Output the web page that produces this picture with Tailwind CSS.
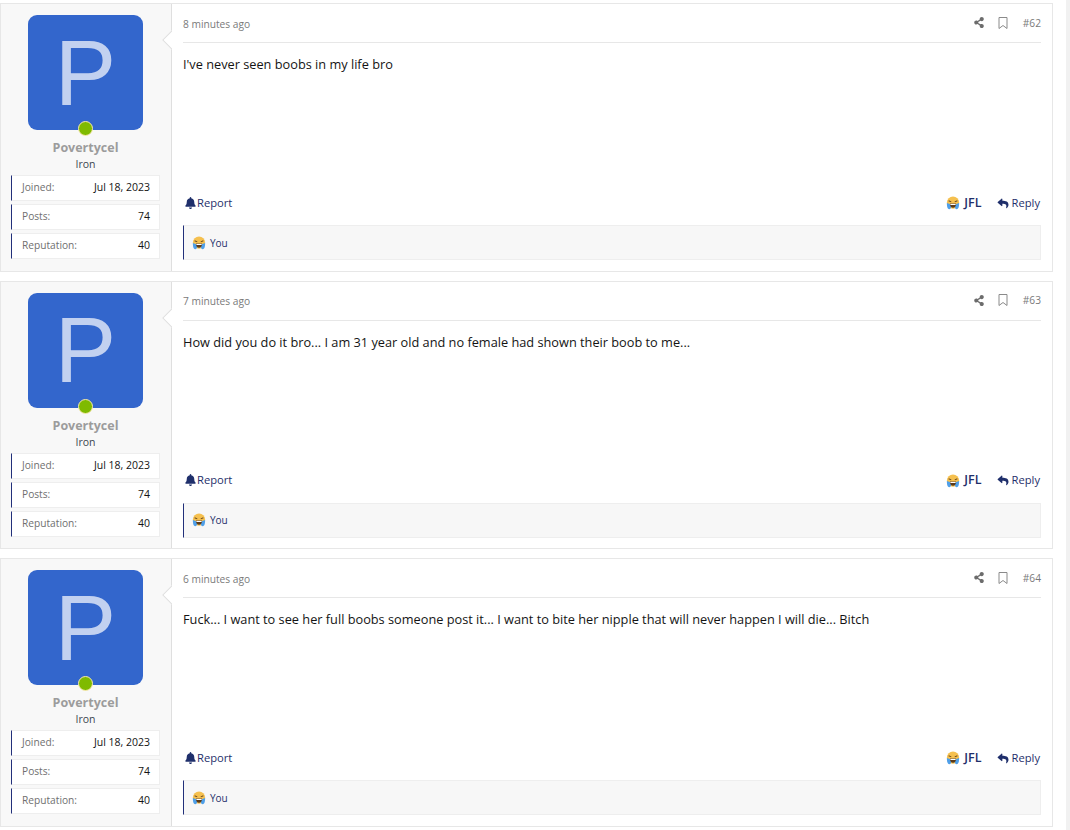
<!DOCTYPE html>
<html lang="en">
<head>
<meta charset="UTF-8">
<title>Thread</title>
<script src="https://cdn.jsdelivr.net/npm/@tailwindcss/browser@4"></script>
</head>
<body class="bg-white font-['Open_Sans',sans-serif] text-[#141414] overflow-hidden">
<svg class="hidden">
  <symbol id="cry" viewBox="0 0 16 16">
    <circle cx="8" cy="7.5" r="7" fill="#f5c04f"/>
    <path d="M1 8c0 3 .3 7 2.800 7S6.500 11.500 5 9.500zM15 8c0 3-.3 7-2.800 7S9.500 11.500 11 9.500z" fill="#4f9fe8"/>
    <path d="M3 5.500l3 1.200M13 5.500l-3 1.200" stroke="#6b4a1f" stroke-width="1.200" fill="none"/>
    <path d="M4.500 8.500h7c0 3.500-1.500 4.800-3.500 4.800s-3.500-1.300-3.500-4.800z" fill="#5a3a1a"/>
    <path d="M5 9h6v1.300H5z" fill="#fff"/>
  </symbol>
  <symbol id="bell" viewBox="0 0 448 512">
    <path fill="currentColor" d="M224 512c35 0 64-29 64-64H160c0 35 29 64 64 64zm215-150c-19-21-55-52-55-154 0-78-54-140-128-155V32a32 32 0 1 0-64 0v21C118 68 64 130 64 208c0 102-36 133-55 154-6 6-9 14-9 22 0 16 13 32 32 32h384c19 0 32-16 32-32 0-8-3-16-9-22z"/>
  </symbol>
  <symbol id="reply" viewBox="0 0 512 512">
    <path fill="currentColor" d="M11 186 187 34c15-13 39-2 39 18v80c161 2 286 34 286 187 0 62-40 123-84 155-14 10-33-3-28-19 46-146-22-185-174-187v88c0 21-24 31-39 18L11 222c-11-10-11-27 0-36z"/>
  </symbol>
  <symbol id="share" viewBox="0 0 448 512">
    <path fill="currentColor" d="M352 320c-23 0-43 8-59 21l-102-64a97 97 0 0 0 0-42l102-64c16 13 36 21 59 21 53 0 96-43 96-96S405 0 352 0s-96 43-96 96c0 7 1 14 2 21l-102 64c-16-13-36-21-59-21-53 0-96 43-96 96s43 96 96 96c23 0 43-8 59-21l102 64c-1 7-2 14-2 21 0 53 43 96 96 96s96-43 96-96-43-96-96-96z"/>
  </symbol>
</svg>

<div class="fixed top-0 right-0 bottom-0 w-[4px] bg-[#f1f1f1]"></div>

<div class="flex flex-col gap-[9px] pt-[3px] w-[1053px]">

  <article class="flex h-[268.500px] border border-[#e7e7e7] border-l-0 bg-white">
    <aside class="relative w-[172px] shrink-0 flex flex-col items-center bg-[#f8f8f8] border-r border-[#dfdfdf] border-l border-l-[#e7e7e7] pt-[11px] pl-[10px] pr-[11px]">
      <div class="absolute right-[-1px] top-[26px] w-[11px] h-[20px] overflow-hidden"><div class="w-[14px] h-[14px] rotate-45 ml-[4px] mt-[3px] bg-white border border-[#dfdfdf]"></div></div>
      <div class="relative w-[115px] h-[115px] shrink-0 rounded-[9px] bg-[#3366cc] text-[#c2d1f0] flex items-center justify-center text-[92px] font-['Liberation_Sans',sans-serif] leading-none">P
        <span class="absolute left-[50px] bottom-[-6px] w-[15px] h-[15px] rounded-full bg-[#7fba00] border border-[#f8e8b0]"></span>
      </div>
      <div class="mt-[9px] text-[12.500px] leading-[18px] font-bold text-[#9c9c9c]">Povertycel</div>
      <div class="text-[10.500px] leading-[15px] text-[#3c4650]">Iron</div>
      <div class="w-[149px] mt-[3px] flex flex-col gap-[3px] text-[10.500px] self-start">
        <div class="h-[26px] flex items-center justify-between bg-white border border-[#eeeeee] border-l-[#22307a] pl-[10px] pr-[9px]"><span class="text-[#6f6f6f] text-[10.200px]">Joined:</span><span>Jul 18, 2023</span></div>
        <div class="h-[26px] flex items-center justify-between bg-white border border-[#eeeeee] border-l-[#22307a] pl-[10px] pr-[9px]"><span class="text-[#6f6f6f] text-[10.200px]">Posts:</span><span>74</span></div>
        <div class="h-[26px] flex items-center justify-between bg-white border border-[#eeeeee] border-l-[#22307a] pl-[10px] pr-[9px]"><span class="text-[#6f6f6f] text-[10.200px]">Reputation:</span><span>40</span></div>
      </div>
    </aside>
    <div class="flex-1 flex flex-col px-[11px] min-w-0">
      <header class="h-[39px] shrink-0 flex items-center justify-between border-b border-[#e7e7e7] text-[10.200px] text-[#7a7a7a]">
        <span class="mt-[3px]">8 minutes ago</span>
        <div class="flex items-center">
          <svg class="w-[10px] h-[11px] text-[#6c6c6c] mr-[14px]"><use href="#share"/></svg>
          <svg class="w-[10px] h-[12px] text-[#8a8a8a] mr-[15px]" viewBox="0 0 10 12" fill="none" stroke="currentColor"><path d="M1 .5h8v11L5 8.500 1 11.500z"/></svg>
          <span class="mt-[1px]">#62</span>
        </div>
      </header>
      <div class="flex-1 pt-[12px] text-[12.750px] leading-[19px]">I've never seen boobs in my life bro</div>
      <footer class="h-[22px] shrink-0 flex items-center justify-between text-[11.200px] text-[#1f2f6b]">
        <div class="flex items-center pl-[2px]"><svg class="w-[11px] h-[12px] mr-[1px]"><use href="#bell"/></svg>Report</div>
        <div class="flex items-center pr-[1px]">
          <svg class="w-[14px] h-[14px] mr-[4px]"><use href="#cry"/></svg>
          <span class="font-semibold text-[12.500px] mr-[15px]">JFL</span>
          <svg class="w-[12px] h-[11px] mr-[3px]"><use href="#reply"/></svg>Reply
        </div>
      </footer>
      <div class="mt-[11px] mb-[10.500px] h-[35px] shrink-0 flex items-center bg-[#f7f7f7] border border-[#eeeeee] border-l-[#22307a] pl-[8px] text-[10px] text-[#1f2f6b]">
        <svg class="w-[14px] h-[14px] mr-[4px]"><use href="#cry"/></svg><span class="mt-[1px]">You</span>
      </div>
    </div>
  </article>

  <article class="flex h-[268.500px] border border-[#e7e7e7] border-l-0 bg-white">
    <aside class="relative w-[172px] shrink-0 flex flex-col items-center bg-[#f8f8f8] border-r border-[#dfdfdf] border-l border-l-[#e7e7e7] pt-[11px] pl-[10px] pr-[11px]">
      <div class="absolute right-[-1px] top-[26px] w-[11px] h-[20px] overflow-hidden"><div class="w-[14px] h-[14px] rotate-45 ml-[4px] mt-[3px] bg-white border border-[#dfdfdf]"></div></div>
      <div class="relative w-[115px] h-[115px] shrink-0 rounded-[9px] bg-[#3366cc] text-[#c2d1f0] flex items-center justify-center text-[92px] font-['Liberation_Sans',sans-serif] leading-none">P
        <span class="absolute left-[50px] bottom-[-6px] w-[15px] h-[15px] rounded-full bg-[#7fba00] border border-[#f8e8b0]"></span>
      </div>
      <div class="mt-[9px] text-[12.500px] leading-[18px] font-bold text-[#9c9c9c]">Povertycel</div>
      <div class="text-[10.500px] leading-[15px] text-[#3c4650]">Iron</div>
      <div class="w-[149px] mt-[3px] flex flex-col gap-[3px] text-[10.500px] self-start">
        <div class="h-[26px] flex items-center justify-between bg-white border border-[#eeeeee] border-l-[#22307a] pl-[10px] pr-[9px]"><span class="text-[#6f6f6f] text-[10.200px]">Joined:</span><span>Jul 18, 2023</span></div>
        <div class="h-[26px] flex items-center justify-between bg-white border border-[#eeeeee] border-l-[#22307a] pl-[10px] pr-[9px]"><span class="text-[#6f6f6f] text-[10.200px]">Posts:</span><span>74</span></div>
        <div class="h-[26px] flex items-center justify-between bg-white border border-[#eeeeee] border-l-[#22307a] pl-[10px] pr-[9px]"><span class="text-[#6f6f6f] text-[10.200px]">Reputation:</span><span>40</span></div>
      </div>
    </aside>
    <div class="flex-1 flex flex-col px-[11px] min-w-0">
      <header class="h-[39px] shrink-0 flex items-center justify-between border-b border-[#e7e7e7] text-[10.200px] text-[#7a7a7a]">
        <span class="mt-[3px]">7 minutes ago</span>
        <div class="flex items-center">
          <svg class="w-[10px] h-[11px] text-[#6c6c6c] mr-[14px]"><use href="#share"/></svg>
          <svg class="w-[10px] h-[12px] text-[#8a8a8a] mr-[15px]" viewBox="0 0 10 12" fill="none" stroke="currentColor"><path d="M1 .5h8v11L5 8.500 1 11.500z"/></svg>
          <span class="mt-[1px]">#63</span>
        </div>
      </header>
      <div class="flex-1 pt-[12px] text-[12.750px] leading-[19px]">How did you do it bro... I am 31 year old and no female had shown their boob to me...</div>
      <footer class="h-[22px] shrink-0 flex items-center justify-between text-[11.200px] text-[#1f2f6b]">
        <div class="flex items-center pl-[2px]"><svg class="w-[11px] h-[12px] mr-[1px]"><use href="#bell"/></svg>Report</div>
        <div class="flex items-center pr-[1px]">
          <svg class="w-[14px] h-[14px] mr-[4px]"><use href="#cry"/></svg>
          <span class="font-semibold text-[12.500px] mr-[15px]">JFL</span>
          <svg class="w-[12px] h-[11px] mr-[3px]"><use href="#reply"/></svg>Reply
        </div>
      </footer>
      <div class="mt-[11px] mb-[10.500px] h-[35px] shrink-0 flex items-center bg-[#f7f7f7] border border-[#eeeeee] border-l-[#22307a] pl-[8px] text-[10px] text-[#1f2f6b]">
        <svg class="w-[14px] h-[14px] mr-[4px]"><use href="#cry"/></svg><span class="mt-[1px]">You</span>
      </div>
    </div>
  </article>

  <article class="flex h-[268.500px] border border-[#e7e7e7] border-l-0 bg-white">
    <aside class="relative w-[172px] shrink-0 flex flex-col items-center bg-[#f8f8f8] border-r border-[#dfdfdf] border-l border-l-[#e7e7e7] pt-[11px] pl-[10px] pr-[11px]">
      <div class="absolute right-[-1px] top-[26px] w-[11px] h-[20px] overflow-hidden"><div class="w-[14px] h-[14px] rotate-45 ml-[4px] mt-[3px] bg-white border border-[#dfdfdf]"></div></div>
      <div class="relative w-[115px] h-[115px] shrink-0 rounded-[9px] bg-[#3366cc] text-[#c2d1f0] flex items-center justify-center text-[92px] font-['Liberation_Sans',sans-serif] leading-none">P
        <span class="absolute left-[50px] bottom-[-6px] w-[15px] h-[15px] rounded-full bg-[#7fba00] border border-[#f8e8b0]"></span>
      </div>
      <div class="mt-[9px] text-[12.500px] leading-[18px] font-bold text-[#9c9c9c]">Povertycel</div>
      <div class="text-[10.500px] leading-[15px] text-[#3c4650]">Iron</div>
      <div class="w-[149px] mt-[3px] flex flex-col gap-[3px] text-[10.500px] self-start">
        <div class="h-[26px] flex items-center justify-between bg-white border border-[#eeeeee] border-l-[#22307a] pl-[10px] pr-[9px]"><span class="text-[#6f6f6f] text-[10.200px]">Joined:</span><span>Jul 18, 2023</span></div>
        <div class="h-[26px] flex items-center justify-between bg-white border border-[#eeeeee] border-l-[#22307a] pl-[10px] pr-[9px]"><span class="text-[#6f6f6f] text-[10.200px]">Posts:</span><span>74</span></div>
        <div class="h-[26px] flex items-center justify-between bg-white border border-[#eeeeee] border-l-[#22307a] pl-[10px] pr-[9px]"><span class="text-[#6f6f6f] text-[10.200px]">Reputation:</span><span>40</span></div>
      </div>
    </aside>
    <div class="flex-1 flex flex-col px-[11px] min-w-0">
      <header class="h-[39px] shrink-0 flex items-center justify-between border-b border-[#e7e7e7] text-[10.200px] text-[#7a7a7a]">
        <span class="mt-[3px]">6 minutes ago</span>
        <div class="flex items-center">
          <svg class="w-[10px] h-[11px] text-[#6c6c6c] mr-[14px]"><use href="#share"/></svg>
          <svg class="w-[10px] h-[12px] text-[#8a8a8a] mr-[15px]" viewBox="0 0 10 12" fill="none" stroke="currentColor"><path d="M1 .5h8v11L5 8.500 1 11.500z"/></svg>
          <span class="mt-[1px]">#64</span>
        </div>
      </header>
      <div class="flex-1 pt-[12px] text-[12.750px] leading-[19px]">Fuck... I want to see her full boobs someone post it... I want to bite her nipple that will never happen I will die... Bitch</div>
      <footer class="h-[22px] shrink-0 flex items-center justify-between text-[11.200px] text-[#1f2f6b]">
        <div class="flex items-center pl-[2px]"><svg class="w-[11px] h-[12px] mr-[1px]"><use href="#bell"/></svg>Report</div>
        <div class="flex items-center pr-[1px]">
          <svg class="w-[14px] h-[14px] mr-[4px]"><use href="#cry"/></svg>
          <span class="font-semibold text-[12.500px] mr-[15px]">JFL</span>
          <svg class="w-[12px] h-[11px] mr-[3px]"><use href="#reply"/></svg>Reply
        </div>
      </footer>
      <div class="mt-[11px] mb-[10.500px] h-[35px] shrink-0 flex items-center bg-[#f7f7f7] border border-[#eeeeee] border-l-[#22307a] pl-[8px] text-[10px] text-[#1f2f6b]">
        <svg class="w-[14px] h-[14px] mr-[4px]"><use href="#cry"/></svg><span class="mt-[1px]">You</span>
      </div>
    </div>
  </article>

</div>
</body>
</html>
